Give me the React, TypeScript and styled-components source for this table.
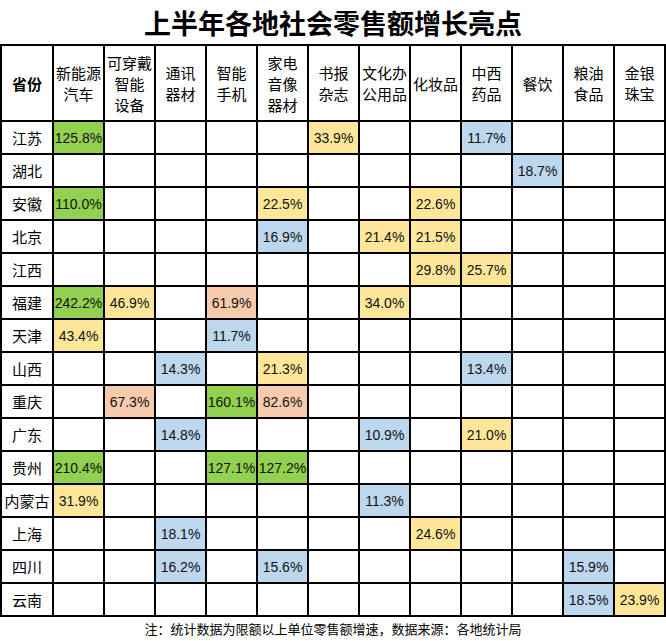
import React from "react";
import styled, { createGlobalStyle } from "styled-components";

const GlobalStyle = createGlobalStyle`
  html, body {
    margin: 0;
    padding: 0;
    background: #fff;
  }
  body {
    font-family: "Noto Sans CJK SC", "Liberation Sans", sans-serif;
    color: #000;
  }
`;

type Tone = "green" | "yellow" | "blue" | "peach";

const toneColors: Record<Tone, string> = {
  green: "#92d050",
  yellow: "#ffe699",
  blue: "#bdd7ee",
  peach: "#f8cbad",
};

const Page = styled.div`
  width: 666px;
  display: flex;
  flex-direction: column;
`;

const Title = styled.h1`
  margin: 0;
  height: 44px;
  line-height: 46px;
  text-align: center;
  font-family: "Noto Sans CJK SC", sans-serif;
  font-size: 27px;
  font-weight: 700;
  letter-spacing: 0;
`;

const Grid = styled.div`
  display: grid;
  grid-template-columns: 50px repeat(12, 49px);
  grid-template-rows: 74px repeat(15, 31px);
  gap: 2px;
  padding: 2px;
  background: #000;
`;

const HeadCell = styled.div<{ $bold?: boolean }>`
  background: #fff;
  display: flex;
  flex-direction: column;
  align-items: center;
  justify-content: center;
  font-family: "Noto Sans CJK SC", sans-serif;
  font-size: 15px;
  line-height: 21px;
  font-weight: ${(p) => (p.$bold ? 700 : 400)};
  white-space: nowrap;
`;

const RowLabel = styled.div`
  background: #fff;
  display: flex;
  align-items: center;
  justify-content: center;
  font-family: "Noto Sans CJK SC", sans-serif;
  font-size: 15px;
  white-space: nowrap;
`;

const ValueCell = styled.div<{ $tone?: Tone }>`
  background: ${(p) => (p.$tone ? toneColors[p.$tone] : "#fff")};
  display: flex;
  align-items: center;
  justify-content: center;
  font-family: "Liberation Sans", Arial, sans-serif;
  font-size: 14px;
  color: #111;
  white-space: nowrap;
`;

const Note = styled.p`
  margin: 0;
  height: 24px;
  line-height: 23px;
  text-align: center;
  font-family: "Noto Sans CJK SC", sans-serif;
  font-size: 13px;
`;

const headers: string[][] = [
  ["新能源", "汽车"],
  ["可穿戴", "智能", "设备"],
  ["通讯", "器材"],
  ["智能", "手机"],
  ["家电", "音像", "器材"],
  ["书报", "杂志"],
  ["文化办", "公用品"],
  ["化妆品"],
  ["中西", "药品"],
  ["餐饮"],
  ["粮油", "食品"],
  ["金银", "珠宝"],
];

type Entry = [number, string, Tone];

const rows: { name: string; values: Entry[] }[] = [
  { name: "江苏", values: [[1, "125.8%", "green"], [6, "33.9%", "yellow"], [9, "11.7%", "blue"]] },
  { name: "湖北", values: [[10, "18.7%", "blue"]] },
  { name: "安徽", values: [[1, "110.0%", "green"], [5, "22.5%", "yellow"], [8, "22.6%", "yellow"]] },
  { name: "北京", values: [[5, "16.9%", "blue"], [7, "21.4%", "yellow"], [8, "21.5%", "yellow"]] },
  { name: "江西", values: [[8, "29.8%", "yellow"], [9, "25.7%", "yellow"]] },
  {
    name: "福建",
    values: [[1, "242.2%", "green"], [2, "46.9%", "yellow"], [4, "61.9%", "peach"], [7, "34.0%", "yellow"]],
  },
  { name: "天津", values: [[1, "43.4%", "yellow"], [4, "11.7%", "blue"]] },
  { name: "山西", values: [[3, "14.3%", "blue"], [5, "21.3%", "yellow"], [9, "13.4%", "blue"]] },
  { name: "重庆", values: [[2, "67.3%", "peach"], [4, "160.1%", "green"], [5, "82.6%", "peach"]] },
  { name: "广东", values: [[3, "14.8%", "blue"], [7, "10.9%", "blue"], [9, "21.0%", "yellow"]] },
  { name: "贵州", values: [[1, "210.4%", "green"], [4, "127.1%", "green"], [5, "127.2%", "green"]] },
  { name: "内蒙古", values: [[1, "31.9%", "yellow"], [7, "11.3%", "blue"]] },
  { name: "上海", values: [[3, "18.1%", "blue"], [8, "24.6%", "yellow"]] },
  { name: "四川", values: [[3, "16.2%", "blue"], [5, "15.6%", "blue"], [11, "15.9%", "blue"]] },
  { name: "云南", values: [[11, "18.5%", "blue"], [12, "23.9%", "yellow"]] },
];

export default function App() {
  return (
    <Page>
      <GlobalStyle />
      <Title>上半年各地社会零售额增长亮点</Title>
      <Grid>
        <HeadCell $bold>省份</HeadCell>
        {headers.map((lines, i) => (
          <HeadCell key={i}>
            {lines.map((l) => (
              <span key={l}>{l}</span>
            ))}
          </HeadCell>
        ))}
        {rows.map((row) => (
          <React.Fragment key={row.name}>
            <RowLabel>{row.name}</RowLabel>
            {Array.from({ length: 12 }, (_, c) => {
              const hit = row.values.find((v) => v[0] === c + 1);
              return (
                <ValueCell key={c} $tone={hit ? hit[2] : undefined}>
                  {hit ? hit[1] : ""}
                </ValueCell>
              );
            })}
          </React.Fragment>
        ))}
      </Grid>
      <Note>注：统计数据为限额以上单位零售额增速，数据来源：各地统计局</Note>
    </Page>
  );
}
